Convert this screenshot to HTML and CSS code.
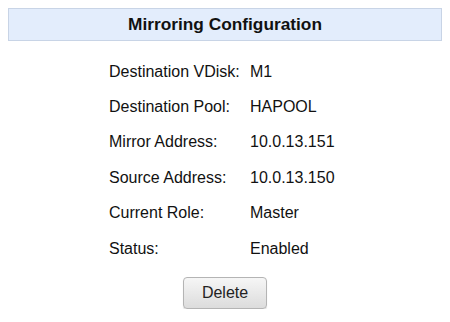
FILE: index.html
```html
<!DOCTYPE html>
<html lang="en">
<head>
  <meta charset="UTF-8">
  <title>Mirroring Configuration</title>
  <link rel="stylesheet" href="styles.css">
</head>
<body>
  <div class="title">Mirroring Configuration</div>

  <table class="config">
    <tr><td class="label">Destination VDisk:</td><td class="value">M1</td></tr>
    <tr><td class="label">Destination Pool:</td><td class="value">HAPOOL</td></tr>
    <tr><td class="label">Mirror Address:</td><td class="value">10.0.13.151</td></tr>
    <tr><td class="label">Source Address:</td><td class="value">10.0.13.150</td></tr>
    <tr><td class="label">Current Role:</td><td class="value">Master</td></tr>
    <tr><td class="label">Status:</td><td class="value">Enabled</td></tr>
  </table>

  <div class="actions">
    <button class="btn">Delete</button>
  </div>
</body>
</html>
```

FILE: styles.css
```css
body {
  margin: 8px;
  font-family: 'Liberation Sans', Arial, sans-serif;
  font-size: 16px;
  color: #111;
  background: #fff;
}

.title {
  height: 31px;
  line-height: 31px;
  background-color: #e3edfc;
  border: 1px solid #c8d4e6;
  text-align: center;
  font-weight: bold;
  font-size: 17.3px;
}

.config {
  width: 232px;
  margin: 13px auto 0;
  border-collapse: collapse;
}

.config td {
  height: 35.4px;
  padding: 0;
  line-height: 18px;
  white-space: nowrap;
}

.config .label {
  width: 141px;
}

.actions {
  text-align: center;
  margin-top: 11px;
}

.btn {
  width: 84px;
  height: 32px;
  font-family: 'Liberation Sans', Arial, sans-serif;
  font-size: 16px;
  color: #222;
  background: linear-gradient(#f6f6f6, #dcdcdc);
  border: 1px solid #b4b4b4;
  border-radius: 4px;
  box-shadow: 0 1px 1px rgba(0, 0, 0, 0.15);
}
```
